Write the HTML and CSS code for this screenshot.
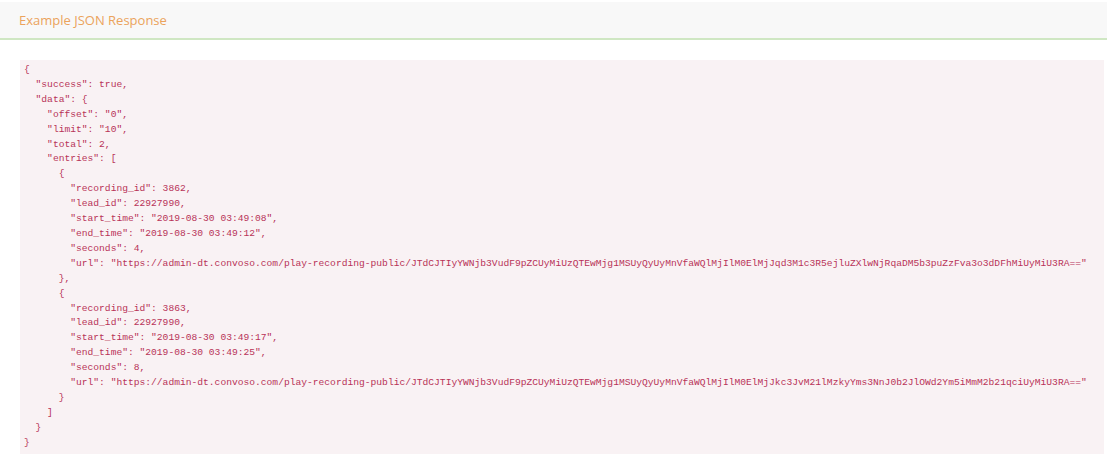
FILE: index.html
```html
<!DOCTYPE html>
<html>
<head>
<meta charset="utf-8">
<link rel="stylesheet" href="styles.css">
</head>
<body>
<div class="panel">
  <div class="panel-heading">Example JSON Response</div>
  <div class="panel-body">
<pre class="code">{
  "success": true,
  "data": {
    "offset": "0",
    "limit": "10",
    "total": 2,
    "entries": [
      {
        "recording_id": 3862,
        "lead_id": 22927990,
        "start_time": "2019-08-30 03:49:08",
        "end_time": "2019-08-30 03:49:12",
        "seconds": 4,
        "url": "https://admin-dt.convoso.com/play-recording-public/JTdCJTIyYWNjb3VudF9pZCUyMiUzQTEwMjg1MSUyQyUyMnVfaWQlMjIlM0ElMjJqd3M1c3R5ejluZXlwNjRqaDM5b3puZzFva3o3dDFhMiUyMiU3RA=="
      },
      {
        "recording_id": 3863,
        "lead_id": 22927990,
        "start_time": "2019-08-30 03:49:17",
        "end_time": "2019-08-30 03:49:25",
        "seconds": 8,
        "url": "https://admin-dt.convoso.com/play-recording-public/JTdCJTIyYWNjb3VudF9pZCUyMiUzQTEwMjg1MSUyQyUyMnVfaWQlMjIlM0ElMjJkc3JvM21lMzkyYms3NnJ0b2JlOWd2Ym5iMmM2b21qciUyMiU3RA=="
      }
    ]
  }
}</pre>
  </div>
</div>
</body>
</html>
```
FILE: styles.css
```css
html, body {
  margin: 0;
  padding: 0;
  background: #ffffff;
}

.panel {
  padding-top: 2px;
}

.panel-heading {
  height: 38px;
  box-sizing: border-box;
  display: flex;
  align-items: center;
  padding: 0 19px 1px;
  background: #f8f8f8;
  border-bottom: 2px solid #cfe7c3;
  font-family: "Open Sans", "Liberation Sans", sans-serif;
  font-size: 13px;
  color: #eba35c;
}

.panel-body {
  padding: 20px 3px 0 20px;
}

.code {
  margin: 0;
  padding: 3px 4px 3px 4px;
  background: #f9f2f4;
  color: #b83258;
  font-family: "Liberation Mono", "DejaVu Sans Mono", monospace;
  font-size: 9.65px;
  line-height: 14.9px;
  white-space: pre;
  overflow: hidden;
}
```
